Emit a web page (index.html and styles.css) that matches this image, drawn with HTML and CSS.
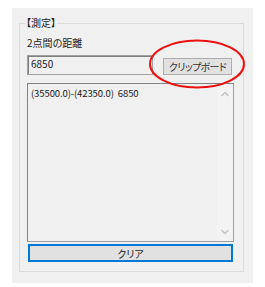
FILE: index.html
```html
<!DOCTYPE html>
<html lang="ja">
<head>
    <meta charset="UTF-8">
    <title>測定</title>
    <link rel="stylesheet" href="styles.css">
</head>
<body>
    <div class="panel">
        <div class="group">
            <div class="legend">【測定】</div>
            <div class="caption">2点間の距離</div>
            <div class="row">
                <div class="textbox">6850</div>
                <button class="btn copy-btn" type="button">クリップボード</button>
            </div>
            <div class="listbox">
                <div class="list-items">
                    <div class="list-item">(35500.0)-(42350.0)  6850</div>
                </div>
                <div class="scrollbar">
                    <svg width="16" height="157" viewBox="0 0 16 157">
                        <polyline points="4.5,12 8,8.5 11.5,12" fill="none" stroke="#c4c4c4" stroke-width="1.5"/>
                        <polyline points="4.5,146 8,149.5 11.5,146" fill="none" stroke="#c4c4c4" stroke-width="1.5"/>
                    </svg>
                </div>
            </div>
            <button class="btn clear-btn" type="button">クリア</button>
        </div>
    </div>

    <!-- annotation drawn over the form -->
    <svg class="mark" width="100" height="54" viewBox="0 0 100 54">
        <ellipse cx="49" cy="26" rx="47" ry="23.5" fill="none" stroke="#ee1111" stroke-width="2"/>
    </svg>
</body>
</html>
```

FILE: styles.css
```css
body {
    margin: 0;
    background-color: #fff;
    font-family: "Noto Sans CJK JP", sans-serif;
    font-size: 10px;
    font-feature-settings: "palt";
    color: #1a1a1a;
}

.panel {
    margin: 8px 0 0 12px;
    width: 241px;
    height: 275px;
    padding-top: 15px;
    box-sizing: border-box;
    background-color: #f0f0f0;
}

.group {
    margin-left: 7px;
    width: 225px;
    height: 249px;
    box-sizing: border-box;
    border: 1px solid #dcdcdc;
    padding-left: 7px;
}

.legend {
    width: fit-content;
    margin: -7px 0 0 -2px;
    padding: 0 1px;
    height: 12px;
    line-height: 12px;
    background-color: #f0f0f0;
}

.caption {
    margin-top: 8px;
    height: 12px;
    line-height: 12px;
    color: #222;
}

.row {
    display: flex;
    align-items: flex-start;
    margin-top: 6px;
}

.textbox {
    width: 126px;
    height: 20px;
    box-sizing: border-box;
    border: 1px solid #a0a0a0;
    box-shadow: inset 1px 1px 0 #808080;
    padding: 2px 0 0 3px;
    line-height: 12px;
    background-color: #f0f0f0;
}

.btn {
    font-family: inherit;
    font-size: 10px;
    font-feature-settings: "palt";
    background-color: #e1e1e1;
    border: 1px solid #adadad;
    padding: 0;
    color: #333;
    box-sizing: border-box;
}

.copy-btn {
    margin: 3px 0 0 10px;
    width: 69px;
    height: 17px;
    line-height: 13px;
    letter-spacing: -0.6px;
    white-space: nowrap;
}

.listbox {
    display: flex;
    margin-top: 8px;
    width: 207px;
    height: 159px;
    box-sizing: border-box;
    border: 1px solid #828282;
    border-color: #828282 #a0a0a0 #a0a0a0 #828282;
    background-color: #f0f0f0;
}

.list-items {
    flex: 1;
    padding: 3px 0 0 3px;
}

.list-item {
    white-space: pre;
    line-height: 12px;
    font-size: 9.5px;
    letter-spacing: -0.1px;
}

.scrollbar {
    width: 16px;
    background-color: #f3f3f3;
}

.scrollbar svg {
    display: block;
}

.clear-btn {
    display: block;
    margin: 2px 0 0 1px;
    width: 205px;
    height: 18px;
    border: 2px solid #0078d7;
    line-height: 13px;
    color: #222;
}

.mark {
    position: absolute;
    left: 148px;
    top: 38px;
}
```
